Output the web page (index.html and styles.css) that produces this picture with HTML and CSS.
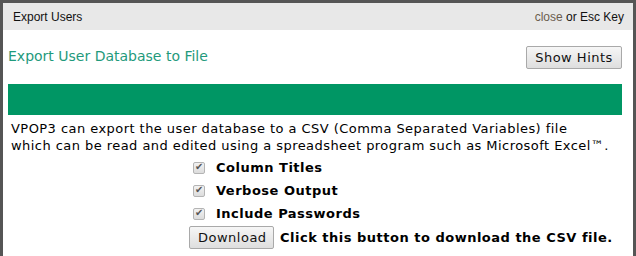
FILE: index.html
```html
<!DOCTYPE html>
<html>
<head>
  <title>Export Users</title>
  <link rel="stylesheet" href="styles.css">
</head>
<body>
  <div class="dialog">
    <div class="dialog-head">
      <span class="dialog-title">Export Users</span>
      <span class="dialog-close"><a href="#" class="close-link">close</a> or Esc Key</span>
    </div>
    <div class="dialog-body">
      <div class="title-row">
        <h2 class="page-title">Export User Database to File</h2>
        <button type="button" class="btn hints-btn">Show Hints</button>
      </div>
      <div class="green-bar"></div>
      <p class="intro">VPOP3 can export the user database to a CSV (Comma Separated Variables) file<br>
        which can be read and edited using a spreadsheet program such as Microsoft Excel&trade;.</p>
      <form class="options">
        <label class="opt"><input type="checkbox" checked> Column Titles</label>
        <label class="opt"><input type="checkbox" checked> Verbose Output</label>
        <label class="opt"><input type="checkbox" checked> Include Passwords</label>
        <div class="download-row">
          <button type="button" class="btn dl-btn">Download</button>
          <b>Click this button to download the CSV file.</b>
        </div>
      </form>
    </div>
  </div>
</body>
</html>
```

FILE: styles.css
```css
body {
  margin: 0;
  background: #555;
  font-family: "DejaVu Sans", Verdana, sans-serif;
}
.dialog {
  margin: 3px 3px 0 3px;
  background: #fff;
  height: 253px;
  overflow: hidden;
}
.dialog-head {
  height: 27px;
  background: #e8e8e8;
  display: flex;
  align-items: center;
  justify-content: space-between;
  padding: 0 9px 0 10px;
  font-family: "Liberation Sans", Arial, sans-serif;
  font-size: 12px;
  color: #111;
}
.close-link {
  color: #6b5d4f;
  text-decoration: none;
}
.dialog-body {
  padding: 0 11px 0 5px;
}
.title-row {
  height: 54px;
  display: flex;
  align-items: center;
  justify-content: space-between;
}
.page-title {
  margin: -3px 0 0 0;
  font-size: 14px;
  font-weight: normal;
  color: #1f9a7c;
}
.btn {
  font-family: "DejaVu Sans", Verdana, sans-serif;
  font-size: 13px;
  letter-spacing: 0.5px;
  color: #111;
  background: linear-gradient(#f6f6f6, #dedede);
  border: 1px solid #a9a9a9;
  border-radius: 2px;
  padding: 2px 8px;
  height: 23px;
}
.hints-btn {
  margin-top: 1px;
  width: 96px;
}
.dl-btn {
  width: 85px;
}
.green-bar {
  height: 31px;
  background: #009664;
}
.intro {
  margin: 5px 0 0 3px;
  font-size: 13px;
  line-height: 17px;
  letter-spacing: 0.45px;
  color: #000;
}
.options {
  display: flex;
  flex-direction: column;
  padding-left: 184px;
  margin-top: 2px;
  font-size: 13px;
  font-weight: bold;
  letter-spacing: 0.5px;
}
.opt {
  display: flex;
  align-items: center;
  height: 23px;
  gap: 11px;
  padding-left: 1px;
}
.opt input {
  appearance: none;
  -webkit-appearance: none;
  margin: 0;
  width: 12px;
  height: 12px;
  border: 1px solid #b4b4b4;
  border-radius: 2px;
  background: linear-gradient(#f2f2f2, #dcdcdc);
  position: relative;
}
.opt input:checked::before {
  content: "\2714";
  position: absolute;
  left: 1px;
  top: -2px;
  font-size: 10px;
  color: #555;
}
.download-row {
  display: flex;
  align-items: center;
  gap: 6px;
  margin: 1px 0 0 -3px;
}
```
